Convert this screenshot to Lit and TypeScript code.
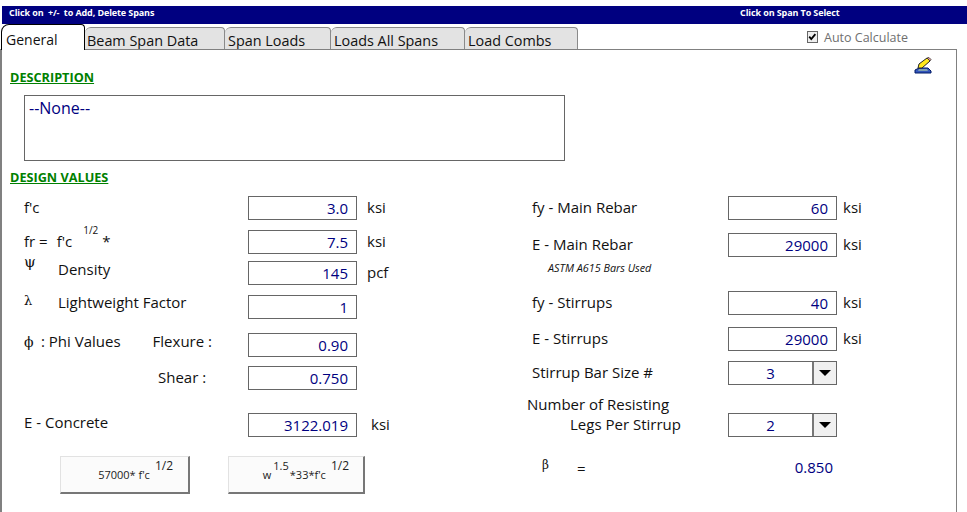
import { LitElement, html, css } from "lit";
import { customElement } from "lit/decorators.js";

const box = (v: string) => html`<div class="box">${v}</div>`;
const combo = (v: string) => html`<div class="box combo"><span class="cv">${v}</span><span class="arrow"><i></i></span></div>`;

@customElement("app-root")
export class AppRoot extends LitElement {
  static styles = css`
    :host { display: block; width: 967px; height: 512px; overflow: hidden; background: #fff; font-family: "Open Sans", "Noto Sans", sans-serif; font-size: 15px; color: #111; }
    * { box-sizing: border-box; }
    .root { display: flex; flex-direction: column; height: 512px; padding-top: 6px; }
    .banner { margin-left: 2px; height: 18px; background: #000080; color: #fff; font-size: 9px; font-weight: 700; line-height: 14px; display: grid; grid-template-columns: 731px 1fr; padding-left: 7px; letter-spacing: -0.1px; }
    .tabrow { display: flex; align-items: flex-end; height: 25px; }
    .tab { height: 22px; background: #e3e3e3; border: 1px solid #8a8a8a; border-bottom: 0; border-left: 0; border-radius: 6px 4px 0 0; padding-left: 3px; font-size: 14.4px; line-height: 26px; white-space: nowrap; color: #111; }
    .tab.active { width: 84px; margin-left: 1px; background: #fff; border: 1px solid #000; border-bottom: 0; border-radius: 8px 4px 0 0; padding-left: 4px; font-size: 14px; line-height: 29px; position: relative; z-index: 1; margin-bottom: -1px; height: 26px; }
    .t1 { width: 140px; padding-left: 2px; } .t2 { width: 106px; } .t3 { width: 134px; } .t4 { width: 113px; }
    .auto { margin-left: auto; margin-right: 59px; align-self: flex-start; display: flex; align-items: center; gap: 6px; color: #6f6f6f; font-size: 12.5px; height: 25px; padding-top: 1px; }
    .chk { width: 11px; height: 12px; border: 1px solid #666; background: #eee; display: block; }
    .panel { flex: 1; width: 957px; border: 1px solid #808080; border-left-width: 2px; border-bottom: 0; padding: 7px 24px 0 8px; }
    .head { display: flex; justify-content: space-between; align-items: flex-end; height: 29px; }
    .head .h { margin-bottom: 1px; }
    .h { font-size: 12.7px; font-weight: 700; color: #008000; text-decoration: underline; line-height: 16px; }
    .pencil { align-self: flex-start; display: block; }
    .desc { margin: 9px 0 0 14px; width: 541px; height: 66px; border: 1px solid #666; color: #000080; padding: 1px 4px; font-size: 16px; line-height: 22px; }
    .h2 { margin-top: 8px; }
    .cols { margin: 11px 0 0 14px; display: grid; grid-template-columns: 508px 1fr; }
    .col { display: grid; }
    .left { grid-template-rows: 34px 31px 34px 38px 33px 47px 43px 38px; }
    .right { grid-template-rows: 37px 58px 36px 34px 52px 43px 24px; }
    .row { display: flex; align-items: flex-start; line-height: 22px; }
    .lab { width: 224px; display: flex; white-space: nowrap; }
    .right .lab { width: 196px; }
    .up2 { margin-top: -2px; } .up3 { margin-top: -3px; } .up4 { margin-top: -4px; }
    .sym { font-family: "DejaVu Serif", serif; font-size: 13px; width: 34px; line-height: 20px; }
    .sym.psi { line-height: 9px; font-size: 15px; }
    .sym.phi { width: 17px; line-height: 24px; font-size: 14px; }
    .box { width: 109px; height: 24px; border: 1px solid #666; color: #000080; text-align: right; padding-right: 8px; line-height: 22px; font-size: 15px; background: #fff; }
    .u { margin-left: 10px; }
    .right .u { margin-left: 6px; }
    .u14 { margin-left: 14px; }
    .flx { margin-left: 32px; }
    .sh { margin-left: 134px; }
    .fc { margin-left: 9px; }
    .sup { font-size: 10px; vertical-align: 5px; margin: 0 4px 0 11px; line-height: 0; }
    .combo { display: flex; padding: 0; text-align: center; }
    .cv { flex: 1; }
    .arrow { width: 24px; border-left: 2px solid #777; background: #f0f0f0; display: flex; align-items: center; justify-content: center; }
    .arrow i { display: block; width: 0; height: 0; border-left: 6px solid transparent; border-right: 6px solid transparent; border-top: 6px solid #000; }
    .stack { display: flex; flex-direction: column; }
    .note { font-size: 10.8px; font-style: italic; line-height: 14px; margin: 4px 0 0 16px; white-space: nowrap; }
    .right .num { width: 201px; margin: -19px 0 0 -5px; flex-direction: column; }
    .num div { line-height: 20px; }
    .num .legs { margin: 0 0 0 43px; }
    .btns { display: flex; gap: 38px; margin-left: 36px; }
    .btn { height: 38px; background: #fbfbfb; border: 1px solid #e2e2e2; border-right: 2px solid #777; border-bottom: 2px solid #777; font-size: 11px; display: flex; justify-content: flex-end; align-items: flex-end; padding-bottom: 9px; line-height: 16px; white-space: pre; color: #222; }
    .b1 { width: 130px; padding-right: 15px; } .b2 { width: 137px; padding-right: 14px; }
    .s2 { margin-bottom: 9px; font-size: 12px; margin-left: 5px; }
    .s2.s3 { margin: 0 1px 9px 2px; font-size: 11px; }
    .beta { font-family: "DejaVu Serif", serif; font-size: 12px; width: 35px; margin-left: 10px; line-height: 18px; }
    .eq { line-height: 24px; }
    .betalab { width: 196px; display: flex; }
    .val { width: 105px; text-align: right; color: #000080; font-size: 15px; line-height: 22px; }
  `;

  render() {
    return html`<div class="root">
      <div class="banner"><span>Click on&nbsp; +/-&nbsp; to Add, Delete Spans</span><span>Click on Span To Select</span></div>
      <div class="tabrow">
        <div class="tab active">General</div>
        <div class="tab t1">Beam Span Data</div>
        <div class="tab t2">Span Loads</div>
        <div class="tab t3">Loads All Spans</div>
        <div class="tab t4">Load Combs</div>
        <div class="auto">
          <svg class="chk" viewBox="0 0 11 12"><path d="M1.5 5.5 L4 8.5 L9 2.5" fill="none" stroke="#000" stroke-width="2.2"/></svg>
          <span>Auto Calculate</span>
        </div>
      </div>
      <div class="panel">
        <div class="head">
          <span class="h">DESCRIPTION</span>
          <svg class="pencil" width="18" height="17" viewBox="0 0 18 17">
            <path d="M1 13 L5 11 L14 11 L17 14 L17 16 L1 16 Z" fill="#3355bb" stroke="#001a66" stroke-width="1"/>
            <path d="M5 12 L13 12 L14 14 L4 14 Z" fill="#7fa0b0"/>
            <path d="M4 11 L5 7 L13 1 L16 4 L8 11 Z" fill="#ffe81a" stroke="#222" stroke-width="1"/>
            <path d="M13 1 L15 0.5 L17 2.5 L16 4 Z" fill="#e89a9a" stroke="#333" stroke-width="0.8"/>
          </svg>
        </div>
        <div class="desc">--None--</div>
        <div class="h h2">DESIGN VALUES</div>
        <div class="cols">
          <div class="col left">
            <div class="row"><div class="lab">f'c</div>${box("3.0")}<span class="u">ksi</span></div>
            <div class="row"><div class="lab"><span>fr =</span><span class="fc">f'c</span><span class="sup">1/2</span>*</div>${box("7.5")}<span class="u">ksi</span></div>
            <div class="row"><div class="lab up3"><span class="sym psi">ψ</span>Density</div>${box("145")}<span class="u">pcf</span></div>
            <div class="row"><div class="lab up4"><span class="sym">λ</span>Lightweight Factor</div>${box("1")}</div>
            <div class="row"><div class="lab up3"><span class="sym phi">ϕ</span>: Phi Values<span class="flx">Flexure :</span></div>${box("0.90")}</div>
            <div class="row"><div class="lab"><span class="sh">Shear :</span></div>${box("0.750")}</div>
            <div class="row"><div class="lab up2">E - Concrete</div>${box("3122.019")}<span class="u u14">ksi</span></div>
            <div class="btns">
              <div class="btn b1"><span>57000* f'c</span><span class="s2">1/2</span></div>
              <div class="btn b2"><span>w</span><span class="s2 s3">1.5</span><span>*33*f'c</span><span class="s2">1/2</span></div>
            </div>
          </div>
          <div class="col right">
            <div class="row"><div class="lab">fy - Main Rebar</div>${box("60")}<span class="u">ksi</span></div>
            <div class="stack">
              <div class="row"><div class="lab">E - Main Rebar</div>${box("29000")}<span class="u">ksi</span></div>
              <div class="note">ASTM A615 Bars Used</div>
            </div>
            <div class="row"><div class="lab">fy - Stirrups</div>${box("40")}<span class="u">ksi</span></div>
            <div class="row"><div class="lab">E - Stirrups</div>${box("29000")}<span class="u">ksi</span></div>
            <div class="row"><div class="lab">Stirrup Bar Size #</div>${combo("3")}</div>
            <div class="row"><div class="lab num"><div>Number of Resisting</div><div class="legs">Legs Per Stirrup</div></div>${combo("2")}</div>
            <div class="row"><div class="betalab"><span class="beta">β</span><span class="eq">=</span></div><span class="val">0.850</span></div>
          </div>
        </div>
      </div>
    </div>`;
  }
}
